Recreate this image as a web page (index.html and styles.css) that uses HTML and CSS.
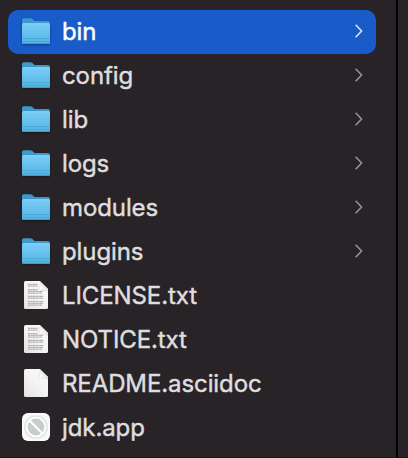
FILE: index.html
```html
<!DOCTYPE html>
<html lang="en">
<head>
<meta charset="utf-8">
<title>Files</title>
<link rel="stylesheet" href="styles.css">
</head>
<body>
<svg class="defs" aria-hidden="true">
  <defs>
    <linearGradient id="front" x1="0" y1="0" x2="0" y2="1"><stop offset="0" stop-color="#79cdf6"/><stop offset="1" stop-color="#55b3e3"/></linearGradient>
    <linearGradient id="paper" x1="1" y1="0" x2="0" y2="1"><stop offset="0" stop-color="#fbfbfb"/><stop offset=".5" stop-color="#f4f4f4"/><stop offset="1" stop-color="#e2e2e2"/></linearGradient>
    <linearGradient id="fold" x1="0" y1="1" x2="1" y2="0"><stop offset="0" stop-color="#fff"/><stop offset=".5" stop-color="#e8e8e8"/><stop offset="1" stop-color="#aaa"/></linearGradient>
    <radialGradient id="app"><stop offset=".5" stop-color="#c5cbcd"/><stop offset=".75" stop-color="#c8cdce"/><stop offset="1" stop-color="#f7f9f9"/></radialGradient>
    <symbol id="folder" viewBox="0 0 28 28">
      <path d="M0 25V2Q0 .2 1.8 .2H8.2Q9.5 .2 10.4 1L12 2.4Q12.6 2.9 13.5 2.9H26Q28 2.9 28 4.7V25Z" fill="#3e98cd"/>
      <path d="M0 6.8Q0 5.3 1.5 5.3H26.5Q28 5.3 28 6.8V24.5Q28 26 26.5 26H1.5Q0 26 0 24.5Z" fill="url(#front)"/>
      <path d="M1 5.8H27" stroke="#8cd8fa" stroke-width=".8"/>
      <path d="M.3 20.6H27.7M.3 23.5H27.7" stroke="#3d9ed2" stroke-width=".6"/>
      <path d="M1 25.6H27" stroke="#338cbf" stroke-width=".8"/>
    </symbol>
    <symbol id="page" viewBox="0 0 28 28">
      <path d="M3.5 0H17.8L26 8V26.5Q26 28 24.5 28H3.5Q2 28 2 26.5V1.5Q2 0 3.5 0Z" fill="url(#paper)"/>
      <path d="M17.5 .5V8.5H26V10.5L16.5 8Z" fill="#aaa" opacity=".35"/>
      <path d="M17.8 0L26 8H18.8Q17.8 8 17.8 7Z" fill="url(#fold)"/>
    </symbol>
    <symbol id="text-page" viewBox="0 0 28 28">
      <use href="#page"/>
      <g fill="none" stroke="#b2b2b2" stroke-width="1.2" stroke-dasharray="2.2 .35 1.4 .3 3 .4">
        <path d="M6 3.3H16M6 5.2H15.5M6 8.6H15.5M6 10.4H21.5M6 12.2H20M6 15.3H21.5M6 17.1H21.5M6 20.5H21.5M6 22.3H21M6 24.1H20"/>
      </g>
    </symbol>
    <symbol id="blocked-app" viewBox="0 0 28 28">
      <rect width="28" height="28" rx="6" fill="#fafcfc"/>
      <rect x="1.5" y="1.5" width="25" height="25" rx="5" fill="url(#app)"/>
      <circle cx="14" cy="14" r="9.4" fill="#c7cccd" stroke="#fff" stroke-width="2"/>
      <path d="M7.5 7.5L20.5 20.5" stroke="#fff" stroke-width="2.2"/>
    </symbol>
    <symbol id="chevron" viewBox="0 0 8 14"><path d="M1.1 1.3L6.6 7L1.1 12.7" fill="none" stroke="currentColor" stroke-width="1.6" stroke-linecap="round" stroke-linejoin="round"/></symbol>
  </defs>
</svg>
<main class="browser">
  <ul class="column">
    <li class="row selected"><svg class="icon folder"><use href="#folder"/></svg><span class="name">bin</span><svg class="chevron"><use href="#chevron"/></svg></li>
    <li class="row"><svg class="icon folder"><use href="#folder"/></svg><span class="name">config</span><svg class="chevron"><use href="#chevron"/></svg></li>
    <li class="row"><svg class="icon folder"><use href="#folder"/></svg><span class="name">lib</span><svg class="chevron"><use href="#chevron"/></svg></li>
    <li class="row"><svg class="icon folder"><use href="#folder"/></svg><span class="name">logs</span><svg class="chevron"><use href="#chevron"/></svg></li>
    <li class="row"><svg class="icon folder"><use href="#folder"/></svg><span class="name">modules</span><svg class="chevron"><use href="#chevron"/></svg></li>
    <li class="row"><svg class="icon folder"><use href="#folder"/></svg><span class="name">plugins</span><svg class="chevron"><use href="#chevron"/></svg></li>
    <li class="row"><svg class="icon"><use href="#text-page"/></svg><span class="name">LICENSE.txt</span></li>
    <li class="row"><svg class="icon"><use href="#text-page"/></svg><span class="name">NOTICE.txt</span></li>
    <li class="row"><svg class="icon"><use href="#page"/></svg><span class="name">README.asciidoc</span></li>
    <li class="row"><svg class="icon"><use href="#blocked-app"/></svg><span class="name">jdk.app</span></li>
  </ul>
  <div class="next-column"></div>
</main>
</body>
</html>
```
FILE: styles.css
```css
* { box-sizing: border-box; }
body { margin: 0; background: #272326; overflow: hidden; }
.defs { position: absolute; width: 0; height: 0; }
.browser { display: flex; height: 458px; border-bottom: 1px solid #171416; }
.column { width: 396px; margin: 0; padding: 10px 20px 0 8px; list-style: none; }
.next-column { flex: 1; border-left: 2px solid #000; }
.row {
  display: flex;
  align-items: center;
  height: 44px;
  padding: 0 13px 0 14px;
  color: #dfdddf;
  font: 400 24px/30px Inter, "Liberation Sans", sans-serif;
  letter-spacing: -.1px;
}
.selected { background: #185bc9; border-radius: 10px; color: #fff; }
.icon { width: 28px; height: 28px; flex: none; margin-top: -2px; overflow: visible; }
.folder { margin-top: 0; filter: drop-shadow(0 1px 1px rgb(0 0 0 / .3)); }
.name { flex: 1; margin-left: 12px; white-space: nowrap; -webkit-text-stroke: .45px; }
.chevron { width: 8px; height: 14px; color: #979397; margin-top: -2px; }
.selected .chevron { color: #dce8fc; }
```
